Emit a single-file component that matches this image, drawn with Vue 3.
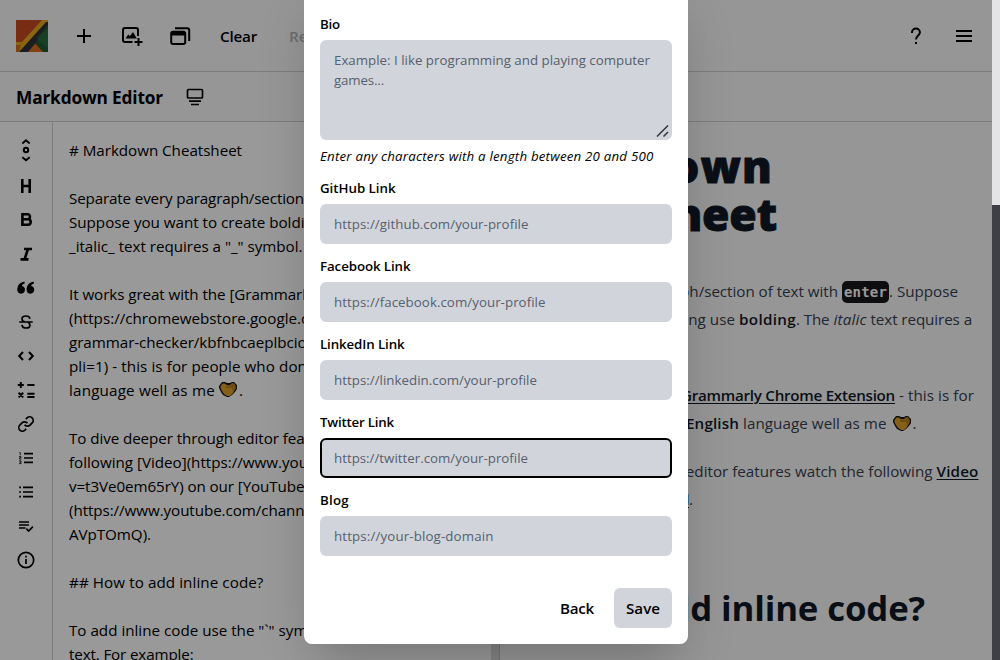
<script setup>
const vFit = {
  mounted(el, { value }) {
    const natural = el.getBoundingClientRect().width
    el.style.letterSpacing = `${(value - natural) / el.textContent.length}px`
  },
}

const editorLines = [
  { text: '# Markdown Cheatsheet', w: 173 },
  {},
  { text: 'Separate every paragraph/section', w: 235, rest: ' of text with `enter`.' },
  { text: 'Suppose you want to create boldi', w: 235.5, rest: 'ng use **bolding**. The' },
  { text: '_italic_ text requires a "_" symbol.', w: 233.5 },
  {},
  { text: 'It works great with the [Grammarl', w: 237, rest: 'y Chrome Extension]' },
  { text: '(https://chromewebstore.google.', w: 232, rest: 'com/detail/' },
  { text: 'grammar-checker/kbfnbcaeplbcio', w: 237.5, rest: 'akkpcpgfkobkghlhen?' },
  { text: 'pli=1) - this is for people who don', w: 238, rest: "'t know **English**" },
  { text: 'language well as me ', w: 150, heart: true },
  {},
  { text: 'To dive deeper through editor fea', w: 235.5, rest: 'tures watch the' },
  { text: 'following [Video](https://www.you', w: 239, rest: 'tube.com/watch?' },
  { text: 'v=t3Ve0em65rY) on our [YouTube', w: 235.5, rest: ' Channel]' },
  { text: '(https://www.youtube.com/chann', w: 235.5, rest: 'el/UCg3avsGct9zd' },
  { text: 'AVpTOmQ).', w: 82 },
  {},
  { text: '## How to add inline code?', w: 194.5 },
  {},
  { text: 'To add inline code use the "`" sym', w: 238.5, rest: 'bol before and after' },
  { text: 'text. For example:', w: 124.5 },
]

const links = [
  { label: 'GitHub Link', lw: 75.5, hint: 'https://github.com/your-profile', w: 194.5 },
  { label: 'Facebook Link', lw: 90.5, hint: 'https://facebook.com/your-profile', w: 211.5 },
  { label: 'LinkedIn Link', lw: 84.5, hint: 'https://linkedin.com/your-profile', w: 203 },
  { label: 'Twitter Link', lw: 74, hint: 'https://twitter.com/your-profile', w: 194, focused: true },
  { label: 'Blog', lw: 29, hint: 'https://your-blog-domain', w: 159.5 },
]
</script>

<template>
  <div class="screen">
    <div class="page">
      <header class="topbar">
        <svg class="logo" viewBox="0 0 32 32">
          <path fill="#c94a22" d="M0 0h32v32H0z" />
          <path fill="#1f5c34" d="M32 0v32h-5l-9-10V14z" />
          <path fill="#276b3e" d="M32 8v20L20 19z" />
          <path fill="#d96f22" d="M10 32l9-8 8 8z" />
          <path fill="#e8a91f" d="M0 22h6L26 0h6v2L4 32H0z" />
          <path fill="#d0701f" d="M0 25h5l-2 7H0z" />
          <path fill="#2f3138" d="M3 32L30 2h2v3L21 18l1 2-10 12z" />
        </svg>
        <svg class="ic plus" viewBox="0 0 24 24"><path d="M12 5v14M5 12h14" /></svg>
        <svg class="ic image" viewBox="0 0 24 24">
          <path d="M12.5 18H5a2 2 0 0 1-2-2V6a2 2 0 0 1 2-2h11a2 2 0 0 1 2 2v6M18.500 14v8M14.500 18h8" />
          <path class="solid" d="M5.500 14.500l2.700-4 1.700 1.600 3.100-4 3.800 6.400z" />
        </svg>
        <svg class="ic windows" viewBox="0 0 24 24">
          <path d="M7 4.200h12.200a2 2 0 0 1 2 2V17" />
          <rect x="3.200" y="7.800" width="14" height="12.200" rx="2" />
          <path class="solid" d="M3 8h14.500v3.500H3z" />
        </svg>
        <span class="nav clear"><span v-fit="37">Clear</span></span>
        <span class="nav reset">Reset</span>
        <span class="spacer"></span>
        <svg class="ic help" viewBox="0 0 24 24"><path d="M8 9V8.500a3.900 3.900 0 0 1 7.900 0c0 2.700-3.900 3.500-3.900 7M12 18v2" /></svg>
        <svg class="ic menu" viewBox="0 0 24 24"><path d="M4 7h16M4 12h16M4 17h16" /></svg>
      </header>

      <div class="titlebar">
        <h1><span v-fit="147">Markdown Editor</span></h1>
        <svg class="ic" viewBox="0 0 24 24"><path class="thin" d="M5.500 4.500h13a1 1 0 0 1 1 1v6.500a1 1 0 0 1-1 1h-13a1 1 0 0 1-1-1V5.500a1 1 0 0 1 1-1zM6 16.200h12M8 19.500h8" /></svg>
      </div>

      <main class="work">
        <aside class="tools">
          <svg class="ic" viewBox="0 0 24 24"><path d="M8.300 3.400L12 .3l3.700 3.100M8.300 17.200l3.700 3.100 3.700-3.100" /><circle cx="12" cy="10" r="2.200" /></svg>
          <svg class="ic bold" viewBox="0 0 24 24"><path d="M8.300 5v14M15.700 5v14M8.300 12h7.400" /></svg>
          <svg class="ic bold" viewBox="0 0 24 24"><path d="M8.400 6.300h5a2.400 2.400 0 0 1 0 5h-5zM8.400 11.300h5.600a2.700 2.700 0 0 1 0 5.400H8.400z" /></svg>
          <svg class="ic bold" viewBox="0 0 24 24"><path d="M10 7h8M6.500 17.400h8M13.900 7l-3.300 10.400" /></svg>
          <svg class="ic" viewBox="0 0 24 24">
            <path class="solid" d="M10.600 5.800v1.700c-1.600.6-2.500 1.500-2.800 2.600a3.800 3.800 0 1 1-4.500 3.700c0-4.500 2.600-7.600 7.300-8z" />
            <path class="solid" d="M19.900 5.800v1.700c-1.600.6-2.500 1.500-2.800 2.600a3.800 3.800 0 1 1-4.500 3.700c0-4.500 2.600-7.600 7.300-8z" />
          </svg>
          <svg class="ic" viewBox="0 0 24 24"><path class="thin" d="M5.300 12h13.400M16 8.800C15.600 6.800 14 6 12 6c-2.300 0-4 1-4 2.900 0 1.500 1 2.300 3 3.100M8 14.800c.2 2.100 1.600 3.200 4 3.200s4-1.100 4-2.800c0-1.500-.8-2.300-2-3.100" /></svg>
          <svg class="ic" viewBox="0 0 24 24"><path d="M9 8l-3.800 4L9 16M15 8l3.800 4-3.800 4" /></svg>
          <svg class="ic" viewBox="0 0 24 24"><path d="M6.800 4v6M3.800 7h6M13.300 7h7.200M4.600 14.800l4.600 4.600M9.200 14.800l-4.600 4.600M13.300 15.700h7.200M13.300 19h7.200" /></svg>
          <svg class="ic" viewBox="0 0 24 24"><path class="chain" transform="translate(3.300 3.300) scale(.725)" d="M10 13a5 5 0 0 0 7.540.54l3-3a5 5 0 0 0-7.070-7.070l-1.720 1.710M14 11a5 5 0 0 0-7.540-.54l-3 3a5 5 0 0 0 7.070 7.070l1.710-1.710" /></svg>
          <svg class="ic" viewBox="0 0 24 24"><path class="thin" d="M10 7.700h9M10 12h9M10 16.300h9" /><path class="hair" d="M5.300 6.600h1v2.700M5 10.600h2v1.200H5.600v1.300H7.400M5 14.800h2v2.800H5M5.600 16.200H7" /></svg>
          <svg class="ic" viewBox="0 0 24 24"><path class="thin" d="M9 7.300h10M9 12h10M9 16.700h10M5.200 7.300H7M5.200 12H7M5.200 16.700H7" /></svg>
          <svg class="ic" viewBox="0 0 24 24"><path class="thin" d="M5 8h10M5 11h10M5 14h6.500M12.300 14.700l2.300 2.300 4.300-4.300" /></svg>
          <svg class="ic" viewBox="0 0 24 24"><circle class="thin" cx="12" cy="12" r="7.700" /><path class="thin" d="M12 11v5M12 7.800v1.700" /></svg>
        </aside>

        <section class="editor">
          <div v-for="(l, i) in editorLines" :key="i" class="line">
            <span v-if="l.text" v-fit="l.w">{{ l.text }}</span><span v-if="l.rest">{{ l.rest }}</span>
            <template v-if="l.heart">
              <svg class="heart" viewBox="0 0 18 16"><path class="edge" d="M3 0h3l2 1h3l2-1h2l3 3v4l-2 3-3 3-3 2H8l-4-2-2-3-2-4V4z" /><path class="fill" d="M3.500 1.500h2L8 3h3l2-1.500h2L16.500 4v2.500L14 11l-3 3H8.300L5 12 3 9 1.500 6V4.300z" /><path class="shade" d="M11 3l2-1.500h2L16.500 4v2.500L14 10l-1-4H7V4.500L8 3z" /></svg><span class="dot">.</span>
            </template>
          </div>
        </section>
        <div class="track"></div>

        <article class="preview">
          <h2><span v-fit="257">Markdown</span><br /><span v-fit="261">Cheatsheet</span></h2>
          <p>
            <span v-fit="322">Separate every paragraph/section of text with</span><code><span v-fit="43">enter</span></code><span v-fit="69">. Suppose</span><br />
            <span v-fit="219">you want to create bolding use</span><b class="sp"><span v-fit="57">bolding</span></b><span v-fit="33.5">. The</span><i class="sp"><span v-fit="33">italic</span></i><span class="sp" v-fit="101.500">text requires a</span><br />
            "_" symbol.
          </p>
          <p>
            <span v-fit="161">It works great with the</span><u class="sp"><span v-fit="214">Grammarly Chrome Extension</span></u><span class="sp" v-fit="75">- this is for</span><br />
            <span v-fit="166">people who don't know</span><b class="sp"><span v-fit="53">English</span></b><span class="sp" v-fit="143.500">language well as me</span><svg class="heart" viewBox="0 0 18 16"><path class="edge" d="M3 0h3l2 1h3l2-1h2l3 3v4l-2 3-3 3-3 2H8l-4-2-2-3-2-4V4z" /><path class="fill" d="M3.500 1.500h2L8 3h3l2-1.500h2L16.500 4v2.500L14 11l-3 3H8.300L5 12 3 9 1.500 6V4.300z" /><path class="shade" d="M11 3l2-1.500h2L16.500 4v2.500L14 10l-1-4H7V4.500L8 3z" /></svg><span class="dot">.</span>
          </p>
          <p>
            <span v-fit="416.500">To dive deeper through editor features watch the following</span><u class="sp"><span v-fit="42">Video</span></u><br />
            <span v-fit="46">on our</span><u class="sp"><span v-fit="123">YouTube Channel</span></u>.
          </p>
          <h3><span v-fit="409">How to add inline code?</span></h3>
        </article>
      </main>
    </div>

    <div class="overlay">
      <form class="modal" @submit.prevent>
        <label><span v-fit="20">Bio</span></label>
        <div class="field area">
          <span v-fit="316">Example: I like programming and playing computer</span><br />
          <span v-fit="50">games...</span>
          <svg class="grip" viewBox="0 0 14 14"><path d="M1 12.500L12 1.500M7.500 12.500L12 8" /></svg>
        </div>
        <em><span v-fit="333.500">Enter any characters with a length between 20 and 500</span></em>
        <template v-for="l in links" :key="l.label">
          <label><span v-fit="l.lw">{{ l.label }}</span></label>
          <div class="field" :class="{ focused: l.focused }"><span v-fit="l.w">{{ l.hint }}</span></div>
        </template>
        <footer>
          <button type="button"><span v-fit="34">Back</span></button>
          <button type="button" class="save"><span v-fit="34">Save</span></button>
        </footer>
      </form>
    </div>
    <div class="scrollbar"><div class="thumb"></div></div>
  </div>
</template>

<style>
body { overflow: hidden; }
</style>

<style scoped>
.screen { position: relative; width: 1000px; height: 660px; overflow: hidden; font-family: "Open Sans", "Noto Sans", sans-serif; font-size: 15.2px; color: #000; }
.screen * { box-sizing: border-box; }
.page { width: 992px; height: 660px; display: flex; flex-direction: column; background: #fafafa; }
.ic { width: 24px; height: 24px; flex: none; overflow: visible; fill: none; stroke: #000; stroke-width: 2; }
.ic .solid { fill: #000; stroke: none; }
.ic .thin { stroke-width: 1.7; }
.ic .hair { stroke-width: 0.8; }
.ic .chain { stroke-width: 2.4; }
.ic.bold { stroke-width: 2.6; }

.topbar { height: 72px; flex: none; display: flex; align-items: center; padding: 0 16px; border-bottom: 1px solid #cfcfd2; }
.logo { width: 32px; height: 32px; }
.plus { margin-left: 24px; }
.image, .windows { margin-left: 24px; }
.nav { font-weight: 550; white-space: nowrap; }
.clear { margin-left: 28px; width: 37px; }
.reset { margin-left: 32px; color: #b4b4b6; }
.spacer { flex: 1; }
.menu { margin-left: 24px; }

.titlebar { height: 50px; flex: none; display: flex; align-items: center; padding-left: 16px; gap: 20px; border-bottom: 1px solid #cfcfd2; }
h1 { margin: 0; padding-top: 2px; font-size: 17.3px; font-weight: 700; white-space: nowrap; width: 147px; }

.work { flex: 1; min-height: 0; display: flex; background: #fafafa; }
.tools { width: 53px; flex: none; display: flex; flex-direction: column; align-items: center; gap: 10px; padding-top: 18px; border-right: 1px solid #cfcfd2; background: #fff; }
.editor { width: 438px; flex: none; overflow: hidden; padding: 16px; background: #fff; }
.line { height: 24px; line-height: 24px; white-space: nowrap; display: flex; align-items: center; }
.line > span { white-space: pre; }
.track { width: 9px; flex: none; background: #dededf; border-right: 1px solid #c4c4c8; }
.heart { width: 18px; height: 16px; flex: none; overflow: visible; }
.edge { fill: #16161b; }
.fill { fill: #dda02e; }
.shade { fill: #b98219; }
.dot { margin-left: 2px; }

.preview { flex: 1; min-width: 0; padding: 20px 0 0 16px; color: #374151; white-space: nowrap; overflow: hidden; }
h2 { margin: 0 0 39px; font-size: 44.5px; line-height: 48px; font-weight: 800; color: #111827; -webkit-text-stroke: 0.9px #111827; }
h3 { margin: 75px 0 0; font-size: 34.8px; line-height: 40px; font-weight: 700; color: #111827; }
p { margin: 0 0 20px; line-height: 28px; }
.sp { margin-left: 4px; }
b, u { font-weight: 600; color: #111827; }
u { text-underline-offset: 2px; }
p .heart { margin-left: 6px; vertical-align: -3px; }
code { display: inline-block; height: 22px; margin-left: 4px; padding: 0 2px; vertical-align: baseline; border-radius: 5px; background: #18181b; color: #fff; font: bold 14px/22px "DejaVu Sans Mono", monospace; }

.overlay { position: absolute; inset: 0 8px 0 0; background: rgba(0, 0, 0, 0.4); }
.modal { position: absolute; left: 304px; bottom: 16px; width: 384px; padding: 32px 16px 16px; border-radius: 8px; background: #fff; box-shadow: 0 25px 50px -12px rgba(0, 0, 0, 0.25); font-size: 13.3px; }
label, em { display: block; height: 20px; line-height: 20px; white-space: nowrap; }
label { margin-bottom: 6px; font-weight: 550; }
.field { height: 40px; margin-bottom: 12px; padding: 8px 12px; border: 2px solid #d1d5db; border-radius: 6px; background: #d1d5db; color: #57606e; line-height: 20px; white-space: nowrap; }
.focused { border-color: #000; }
.area { position: relative; height: 100px; margin-bottom: 6px; }
.grip { position: absolute; right: 0; bottom: 0; width: 14px; height: 14px; fill: none; stroke: #333; stroke-width: 1.5; }
em { margin-bottom: 12px; }
footer { display: flex; justify-content: flex-end; gap: 8px; margin-top: 32px; }
button { width: 58px; height: 40px; padding: 0; border: 0; border-radius: 6px; background: none; font: 550 15.2px "Open Sans", sans-serif; color: #000; white-space: nowrap; }
.save { background: #d1d5db; }

.scrollbar { position: absolute; top: 0; right: 0; width: 8px; height: 660px; background: #3f3f46; }
.thumb { height: 205px; background: #e4e4e7; }
</style>
